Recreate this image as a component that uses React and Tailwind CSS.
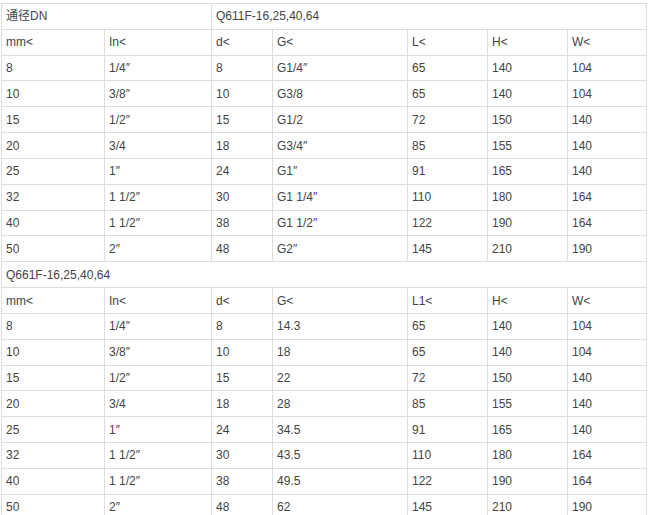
import React from "react";

const rows1 = [
  ["8", "1/4\u2033", "8", "G1/4\u2033", "65", "140", "104"],
  ["10", "3/8\u2033", "10", "G3/8", "65", "140", "104"],
  ["15", "1/2\u2033", "15", "G1/2", "72", "150", "140"],
  ["20", "3/4", "18", "G3/4\u2033", "85", "155", "140"],
  ["25", "1\u2033", "24", "G1\u2033", "91", "165", "140"],
  ["32", "1 1/2\u2033", "30", "G1 1/4\u2033", "110", "180", "164"],
  ["40", "1 1/2\u2033", "38", "G1 1/2\u2033", "122", "190", "164"],
  ["50", "2\u2033", "48", "G2\u2033", "145", "210", "190"],
];
const rows2 = [
  ["8", "1/4\u2033", "8", "14.3", "65", "140", "104"],
  ["10", "3/8\u2033", "10", "18", "65", "140", "104"],
  ["15", "1/2\u2033", "15", "22", "72", "150", "140"],
  ["20", "3/4", "18", "28", "85", "155", "140"],
  ["25", "1\u2033", "24", "34.5", "91", "165", "140"],
  ["32", "1 1/2\u2033", "30", "43.5", "110", "180", "164"],
  ["40", "1 1/2\u2033", "38", "49.5", "122", "190", "164"],
  ["50", "2\u2033", "48", "62", "145", "210", "190"],
];

const td = "border border-[#dddddd] h-[25.84px] pl-[4px] pr-[2px] py-0 text-left align-middle whitespace-nowrap";

function Row({ cells }) {
  return (
    <tr>
      {cells.map((c, i) => (
        <td key={i} className={td}>{c}</td>
      ))}
    </tr>
  );
}

export default function App() {
  return (
    <div className="bg-white w-[650px] h-[515px] overflow-hidden pt-[3px] pl-[1px]">
      <table
        className="table-fixed border-collapse w-[645px] text-[12px] leading-[14px] text-[#444444]"
        style={{ fontFamily: '"Liberation Sans", Arial, "Noto Sans CJK SC", sans-serif' }}
      >
        <colgroup>
          <col className="w-[103px]" />
          <col className="w-[107px]" />
          <col className="w-[61px]" />
          <col className="w-[135px]" />
          <col className="w-[80px]" />
          <col className="w-[80px]" />
          <col className="w-[79px]" />
        </colgroup>
        <tbody>
          <tr>
            <td colSpan={2} className={td}>通径DN</td>
            <td colSpan={5} className={td}>Q611F-16,25,40,64</td>
          </tr>
          <Row cells={["mm<", "In<", "d<", "G<", "L<", "H<", "W<"]} />
          {rows1.map((r, i) => <Row key={"a" + i} cells={r} />)}
          <tr>
            <td colSpan={7} className={td}>Q661F-16,25,40,64</td>
          </tr>
          <Row cells={["mm<", "In<", "d<", "G<", "L1<", "H<", "W<"]} />
          {rows2.map((r, i) => <Row key={"b" + i} cells={r} />)}
        </tbody>
      </table>
    </div>
  );
}
